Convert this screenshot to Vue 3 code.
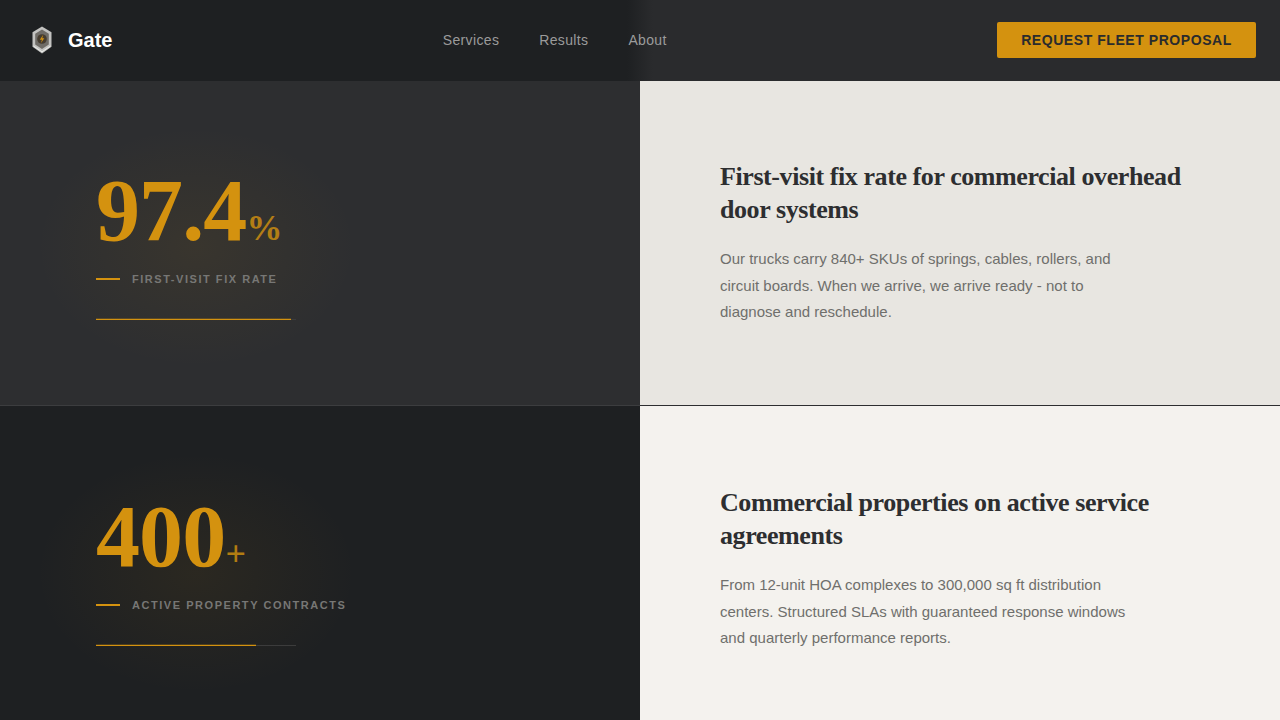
<template>
  <div class="page">
    <header class="topbar">
      <div class="brand">
        <svg class="logo" width="24" height="30" viewBox="0 0 24 30" aria-hidden="true">
          <path d="M12 1.500 L21.500 7.300 V21.800 L12 28.500 L2.500 21.800 V7.300 Z" fill="#c2c2c0" />
          <path d="M12 4.500 L18.800 8.800 V19.500 L12 24 L5.200 19.500 V8.800 Z" fill="#6f6c67" />
          <path d="M3.500 21 L12 26.800 L20.500 21" fill="none" stroke="#ecece9" stroke-width="1" />
          <circle cx="12" cy="14" r="4.800" fill="#453c30" />
          <path d="M13.200 9.800 L9.800 14.800 H12 L10.800 18.300 L14.300 13.300 H12.200 Z" fill="#d4920f" />
        </svg>
        <span class="brand-name">Gate</span>
      </div>
      <nav class="nav">
        <a v-for="link in links" :key="link" href="#">{{ link }}</a>
      </nav>
      <button type="button" class="cta">REQUEST FLEET PROPOSAL</button>
    </header>

    <section v-for="(row, index) in rows" :key="row.label" class="row" :class="{ first: index === 0 }">
      <div class="stat-panel">
        <div class="stat">
          <div class="figure">
            <span class="value">{{ row.value }}</span><span class="unit">{{ row.unit }}</span>
          </div>
          <div class="label"><i></i>{{ row.label }}</div>
          <div class="track" :style="{ width: row.track + 'px' }">
            <div class="fill" :style="{ width: row.fill + 'px' }"></div>
          </div>
        </div>
      </div>
      <div class="copy-panel">
        <h2>{{ row.title }}</h2>
        <p>{{ row.text }}</p>
      </div>
    </section>
  </div>
</template>

<script setup>
const links = ['Services', 'Results', 'About']

const rows = [
  {
    value: '97.4',
    unit: '%',
    label: 'FIRST-VISIT FIX RATE',
    track: 200,
    fill: 195,
    title: 'First-visit fix rate for commercial overhead door systems',
    text: 'Our trucks carry 840+ SKUs of springs, cables, rollers, and circuit boards. When we arrive, we arrive ready - not to diagnose and reschedule.'
  },
  {
    value: '400',
    unit: '+',
    label: 'ACTIVE PROPERTY CONTRACTS',
    track: 200,
    fill: 160,
    title: 'Commercial properties on active service agreements',
    text: 'From 12-unit HOA complexes to 300,000 sq ft distribution centers. Structured SLAs with guaranteed response windows and quarterly performance reports.'
  }
]
</script>

<style scoped>
.page {
  width: 1280px;
  height: 720px;
  overflow: hidden;
  display: grid;
  grid-template-rows: 81px 325px 326px;
  font-family: "Liberation Sans", Arial, sans-serif;
}

.topbar {
  display: flex;
  justify-content: space-between;
  align-items: center;
  padding: 0 24px 1px 30px;
  background: linear-gradient(90deg, #1e2022 0%, #1e2022 49%, #2a2b2d 51%, #2a2b2d 100%);
}

.brand {
  display: flex;
  align-items: center;
  gap: 14px;
}

.brand-name {
  color: #fff;
  font-size: 20px;
  font-weight: 700;
}

.nav {
  display: flex;
  gap: 40px;
}

.nav a {
  color: #9b9b9b;
  font-size: 14px;
  letter-spacing: 0.35px;
  text-decoration: none;
}

.cta {
  width: 259px;
  height: 36px;
  border: 0;
  border-radius: 2px;
  background: #d4920f;
  color: #2a2b2d;
  font: 700 14px "Liberation Sans", Arial, sans-serif;
  letter-spacing: 0.04em;
}

.row {
  display: grid;
  grid-template-columns: 640px 640px;
}

.stat-panel {
  display: flex;
  align-items: center;
  padding-left: 96px;
  background: #1e2022;
}

.first .stat-panel {
  background: #2d2e30;
  border-bottom: 1px solid #3c3d3f;
}

.stat {
  position: relative;
}

.stat::before {
  content: "";
  position: absolute;
  left: -60px;
  top: -40px;
  width: 320px;
  height: 240px;
  background: radial-gradient(closest-side, rgba(212, 146, 15, 0.07), rgba(212, 146, 15, 0));
  pointer-events: none;
}

.figure {
  position: relative;
  color: #d4920f;
  font: 700 88px/88px "Liberation Serif", "Times New Roman", serif;
  white-space: nowrap;
}

.value {
  letter-spacing: -0.01em;
}

.unit {
  font-size: 36px;
  line-height: 1;
  opacity: 0.8;
}

.label {
  position: relative;
  display: flex;
  align-items: center;
  gap: 12px;
  margin-top: 18px;
  color: #777775;
  font-size: 11px;
  font-weight: 700;
  letter-spacing: 0.14em;
  white-space: nowrap;
}

.label i {
  width: 24px;
  height: 2px;
  background: #d4920f;
}

.track {
  position: relative;
  height: 1px;
  margin-top: 34px;
  background: #3c3c3c;
}

.fill {
  height: 1px;
  background: #d4920f;
  box-shadow: 0 -1px 0 rgba(212, 146, 15, 0.25);
}

.copy-panel {
  display: flex;
  flex-direction: column;
  justify-content: center;
  padding-left: 80px;
  background: #f4f2ee;
}

.first .copy-panel {
  background: #e8e6e1;
  border-bottom: 1px solid #2d2e30;
}

h2 {
  width: 480px;
  margin: 0 0 20px;
  color: #2d2e30;
  font: 700 26px/33px "Liberation Serif", "Times New Roman", serif;
  letter-spacing: -0.42px;
}

p {
  width: 420px;
  margin: 0;
  color: #6f6f6c;
  font-size: 15px;
  line-height: 26.400px;
}
</style>

<style>
body {
  background: #1e2022;
}
</style>
